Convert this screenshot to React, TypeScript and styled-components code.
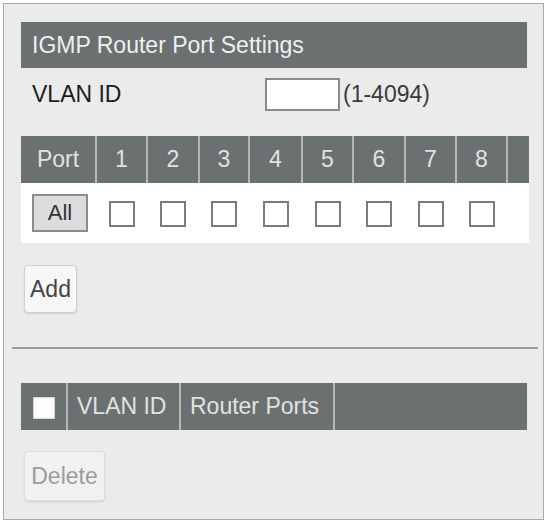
import React from "react";
import styled, { createGlobalStyle } from "styled-components";

const Global = createGlobalStyle`
  html, body { margin: 0; padding: 0; background: #ffffff; }
  body { font-family: "Liberation Sans", Arial, sans-serif; }
  * { box-sizing: border-box; }
`;

const Panel = styled.div`
  margin: 3px 0 0 3px;
  width: 541px;
  height: 517px;
  border: 1px solid #a8a8a8;
  background: #ebebeb;
  padding: 18px 16px 0 17px;
  display: flex;
  flex-direction: column;
  font-size: 23px;
`;

const TitleBar = styled.div`
  height: 46px;
  background: #6b7070;
  color: #f0f0f0;
  display: flex;
  align-items: center;
  padding-left: 11px;
`;

const VlanRow = styled.div`
  margin-top: 10px;
  height: 33px;
  display: flex;
  align-items: center;
  padding-left: 11px;
`;

const Label = styled.span`
  width: 233px;
  color: #1c1c1c;
`;

const TextInput = styled.input`
  width: 75px;
  height: 33px;
  border: 2px solid #8a8a8a;
  background: #ffffff;
  margin: 0 3px 0 0;
  padding: 0;
`;

const Hint = styled.span`
  color: #3a3a3a;
`;

const Table = styled.table<{ $top: number }>`
  margin-top: ${(p) => p.$top}px;
  width: 506px;
  border-collapse: collapse;
  table-layout: fixed;
`;

const Th = styled.th<{ $w: number }>`
  width: ${(p) => p.$w}px;
  height: ${(p) => 47}px;
  background: #6b7070;
  color: #e2e2e2;
  font-weight: normal;
  padding: 0;
  text-align: center;
  border-left: 2px solid #b4b8b8;
  &:first-child { border-left: none; }
`;

const ThLeft = styled(Th)`
  text-align: left;
  padding-left: 9px;
`;

const CheckRow = styled.tr`
  background: #ffffff;
  height: 60px;
`;

const Td = styled.td`
  padding: 0;
  text-align: center;
  vertical-align: middle;
`;

const AllButton = styled.button`
  width: 56px;
  height: 38px;
  border: 2px solid #8c8c8c;
  background: #dcdcdc;
  color: #333;
  font-family: inherit;
  font-size: 22px;
  padding: 0;
  margin-left: 3px;
`;

const Box = styled.span`
  display: inline-block;
  width: 26px;
  height: 26px;
  border: 2px solid #7a7a7a;
  background: #fff;
  vertical-align: middle;
`;

const HeadBox = styled.span`
  display: inline-block;
  width: 22px;
  height: 22px;
  background: #fdfdfd;
  border: 1px solid #d8d8d8;
  vertical-align: middle;
`;

const Btn = styled.button<{ $top: number; $w: number; $h: number; $disabled?: boolean }>`
  align-self: flex-start;
  margin-top: ${(p) => p.$top}px;
  margin-left: 3px;
  width: ${(p) => p.$w}px;
  height: ${(p) => p.$h}px;
  border: 1px solid ${(p) => (p.$disabled ? "#dedede" : "#d0d0d0")};
  border-radius: 4px;
  background: ${(p) => (p.$disabled ? "#f1f1f1" : "#f7f7f7")};
  color: ${(p) => (p.$disabled ? "#9c9c9c" : "#444")};
  box-shadow: 0 1px 2px rgba(0, 0, 0, 0.12);
  font-family: inherit;
  font-size: 23px;
  padding: 0;
`;

const Rule = styled.div`
  margin: 34px -11px 0 -9px;
  height: 2px;
  background: #9c9c9c;
`;

const ports = [1, 2, 3, 4, 5, 6, 7, 8];
const portW = [51, 52, 50, 53, 51, 52, 51, 51];

export default function App() {
  return (
    <>
      <Global />
      <Panel>
        <TitleBar>IGMP Router Port Settings</TitleBar>
        <VlanRow>
          <Label>VLAN ID</Label>
          <TextInput type="text" />
          <Hint>(1-4094)</Hint>
        </VlanRow>
        <Table $top={25}>
          <thead>
            <tr>
              <Th $w={75}>Port</Th>
              {ports.map((n, i) => (
                <Th key={n} $w={portW[i]}>{n}</Th>
              ))}
              <Th $w={22}></Th>
            </tr>
          </thead>
          <tbody>
            <CheckRow>
              <Td>
                <AllButton>All</AllButton>
              </Td>
              {ports.map((n) => (
                <Td key={n}>
                  <Box />
                </Td>
              ))}
              <Td />
            </CheckRow>
          </tbody>
        </Table>
        <Btn $top={22} $w={53} $h={48}>Add</Btn>
        <Rule />
        <Table $top={34}>
          <thead>
            <tr>
              <Th $w={46}>
                <HeadBox />
              </Th>
              <ThLeft $w={113}>VLAN ID</ThLeft>
              <ThLeft $w={154}>Router Ports</ThLeft>
              <Th $w={193}></Th>
            </tr>
          </thead>
        </Table>
        <Btn $top={21} $w={81} $h={50} $disabled>Delete</Btn>
      </Panel>
    </>
  );
}
